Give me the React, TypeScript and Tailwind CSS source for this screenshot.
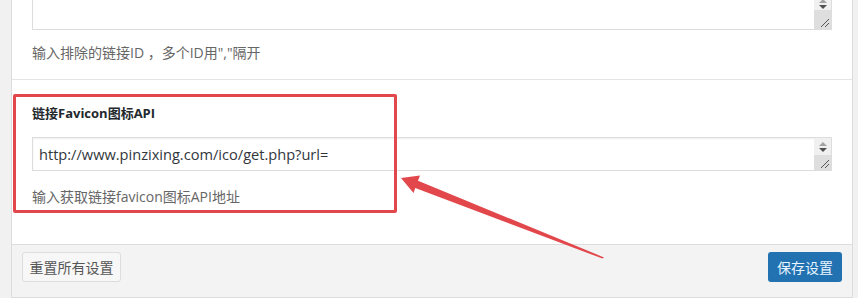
import React from 'react';

const font = { fontFamily: '"Open Sans", "Noto Sans CJK SC", sans-serif' };

// fake scroll column with arrows and resize grip seen on textareas
function ScrollGrip() {
  return (
    <div className="absolute right-0 top-0 bottom-0 w-[17px] flex flex-col">
      <div className="flex flex-col items-center justify-center gap-[2px] bg-[#f0f0f0] h-[17px]">
        <svg width="8" height="4" viewBox="0 0 8 4">
          <polygon points="4,0 8,4 0,4" fill="#a3a3a3" />
        </svg>
        <svg width="8" height="4" viewBox="0 0 8 4">
          <polygon points="0,0 8,0 4,4" fill="#505050" />
        </svg>
      </div>
      <div className="flex-1 bg-[#dedede] relative">
        <svg className="absolute right-[2px] bottom-[2px]" width="10" height="10" viewBox="0 0 10 10">
          <line x1="2" y1="10" x2="10" y2="2" stroke="#555" strokeWidth="1" />
          <line x1="6" y1="10" x2="10" y2="6" stroke="#555" strokeWidth="1" />
        </svg>
      </div>
    </div>
  );
}

export default function App() {
  return (
    <div className="relative w-[858px] h-[298px] overflow-hidden bg-[#f1f1f1] pl-[11px]" style={font}>
      <div className="w-[842px] h-[298px] bg-white border-x border-b border-[#dcdcde] flex flex-col">
        {/* excluded link IDs (top cut off) */}
        <div className="px-5 pb-[16px] border-b border-[#e5e5e5]">
          <div className="relative h-[30px] border-x border-b border-[#dddddd] bg-white">
            <div className="absolute right-0 top-[-8px] bottom-0 w-[17px] flex flex-col">
              <div className="flex flex-col items-center justify-end gap-[2px] bg-[#f0f0f0] h-[18px] pb-[1px]">
                <svg width="8" height="4" viewBox="0 0 8 4">
                  <polygon points="4,0 8,4 0,4" fill="#a3a3a3" />
                </svg>
                <svg width="8" height="4" viewBox="0 0 8 4">
                  <polygon points="0,0 8,0 4,4" fill="#505050" />
                </svg>
              </div>
              <div className="flex-1 bg-[#dedede] relative">
                <svg className="absolute right-[2px] bottom-[2px]" width="10" height="10" viewBox="0 0 10 10">
                  <line x1="2" y1="10" x2="10" y2="2" stroke="#555" strokeWidth="1" />
                  <line x1="6" y1="10" x2="10" y2="6" stroke="#555" strokeWidth="1" />
                </svg>
              </div>
            </div>
          </div>
          <p className="mt-[13px] text-[14px] leading-[20px] text-[#666]">输入排除的链接ID ，多个ID用","隔开</p>
        </div>

        {/* favicon api */}
        <div className="px-5 pt-[23px] flex-1">
          <label className="block text-[13px] leading-[20px] font-bold text-[#23282d]">链接Favicon图标API</label>
          <div className="relative mt-[14px] h-[34px] border border-[#dddddd] shadow-[inset_0_1px_2px_rgba(0,0,0,0.07)] bg-white">
            <span className="absolute left-[6px] top-[6px] text-[14.6px] leading-[20px] text-[#32373c]">
              http://www.pinzixing.com/ico/get.php?url=
            </span>
            <ScrollGrip />
          </div>
          <p className="mt-[16px] text-[14px] leading-[20px] text-[#666]">输入获取链接favicon图标API地址</p>
        </div>

        {/* footer */}
        <div className="h-[53px] bg-[#f3f3f3] border-t border-[#dddddd] flex items-start justify-between px-[10px] pt-[7px]">
          <button className="h-[30px] w-[99px] rounded-[3px] border border-[#dddddd] bg-[#f7f7f7] text-[14px] text-[#555]">
            重置所有设置
          </button>
          <button className="h-[30px] w-[74px] rounded-[3px] bg-[#2271b1] text-[14px] text-[#e8f4ff]">
            保存设置
          </button>
        </div>
      </div>

      {/* annotation overlay */}
      <div className="absolute left-[13px] top-[94px] w-[384px] h-[119px] border-[3px] border-[#e2474b] rounded-[2px]" />
      <svg className="absolute left-0 top-0 pointer-events-none" width="858" height="298" viewBox="0 0 858 298">
        <polygon
          points="401,178 420,175.5 418,180.8 604,257.4 602.5,258.6 415.3,188 413.5,193"
          fill="#e2474b"
        />
      </svg>
    </div>
  );
}
